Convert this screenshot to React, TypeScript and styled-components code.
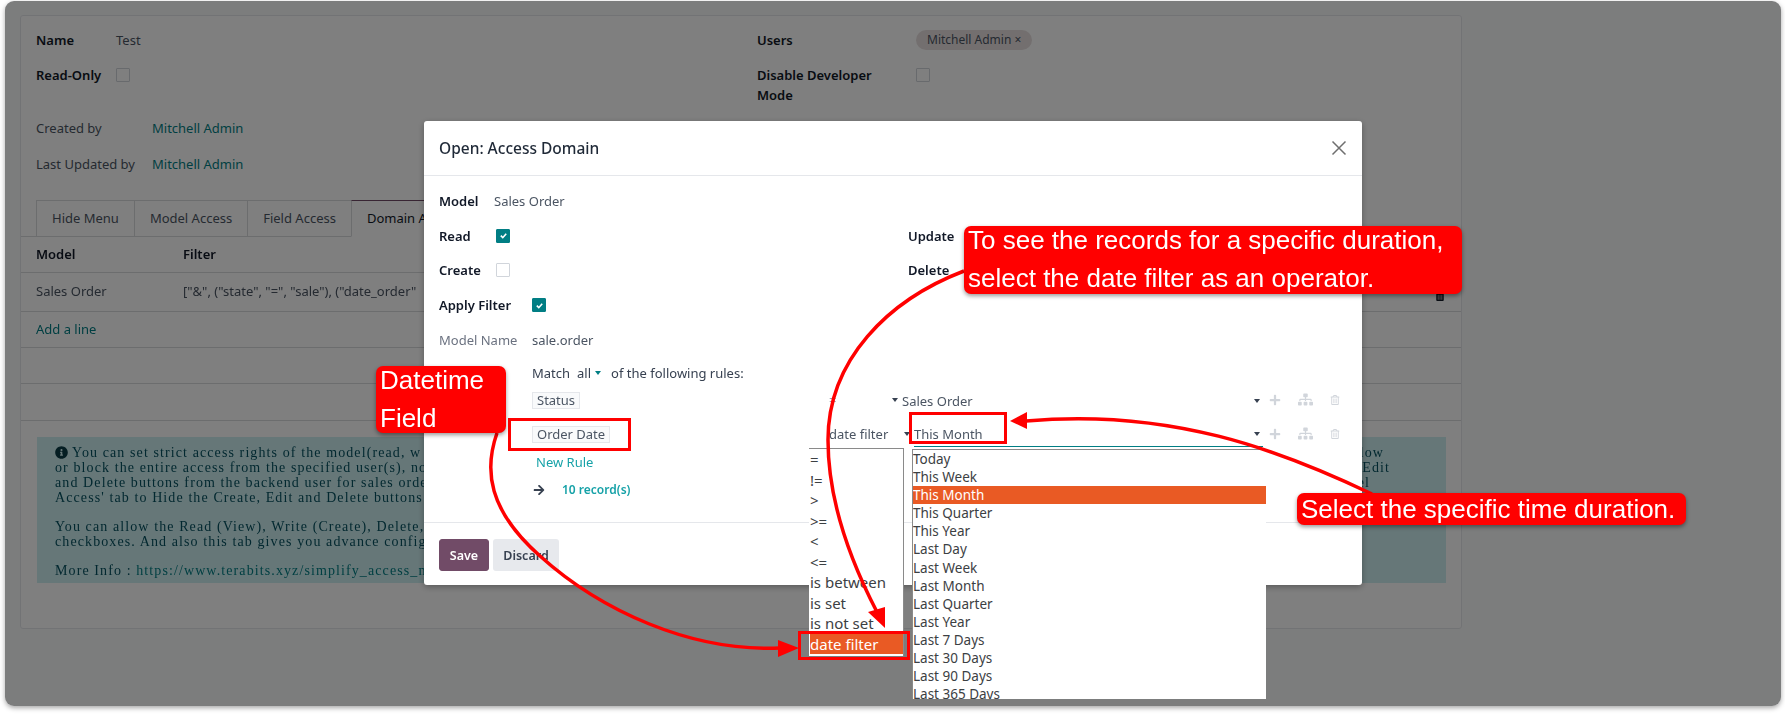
import React from "react";
import styled, { createGlobalStyle } from "styled-components";
import { FaArrowRight, FaInfoCircle, FaPlus, FaRegTrashAlt, FaSitemap, FaTrashAlt } from "react-icons/fa";

const GlobalStyle = createGlobalStyle`
    html, body {
        margin: 0;
        background: #ffffff;
        overflow: hidden;
    }
    * {
        box-sizing: border-box;
    }
`

const teal = "#017e84"
const orange = "#e95a24"
const ui = `"Noto Sans", "Open Sans", sans-serif`

const operators = ["=", "!=", ">", ">=", "<", "<=", "is between", "is set", "is not set", "date filter"]
const durations = ["Today", "This Week", "This Month", "This Quarter", "This Year", "Last Day", "Last Week", "Last Month", "Last Quarter", "Last Year", "Last 7 Days", "Last 30 Days", "Last 90 Days", "Last 365 Days"]

const Check = ({ on }: { on?: boolean }) => (
    <CheckBox $on={on}>
        {on && (
            <svg width="9" height="9" viewBox="0 0 10 10">
                <path d="M2 5.2 4.2 7.4 8 3" fill="none" stroke="#fff" strokeWidth="1.8" />
            </svg>
        )}
    </CheckBox>
)

const RuleActions = () => (
    <Actions>
        <FaPlus size={12} />
        <FaSitemap size={15} />
        <FaRegTrashAlt size={10} />
    </Actions>
)

const Arrows = () => (
    <ArrowLayer width="1785" height="714" viewBox="0 0 1785 714">
        <g fill="none" stroke="#ff0000" strokeWidth="3.5">
            <path d="M497 433C484 470 488 510 540 556C600 610 690 652 780 648" />
            <path d="M964 271C888 300 828 360 828 440C828 500 850 560 877 612" />
            <path d="M1372 494C1280 450 1170 408 1026 421" />
        </g>
        <g fill="#ff0000">
            <path d="M799 648 778 640V657Z" />
            <path d="M885 628 868 612 885 607Z" />
            <path d="M1010 421 1027 412V429Z" />
        </g>
    </ArrowLayer>
)

export default function App() {
    return (
        <Root>
            <GlobalStyle />
            <Window>
                <Sheet>
                    <TopForm>
                        <FormColumn>
                            <FieldRow>
                                <StrongLabel $w={80}>Name</StrongLabel>
                                <Value>Test</Value>
                            </FieldRow>
                            <FieldRow>
                                <StrongLabel $w={80}>Read-Only</StrongLabel>
                                <Check />
                            </FieldRow>
                            <MetaRow $first>
                                <MutedLabel $w={116}>Created by</MutedLabel>
                                <PageLink>Mitchell Admin</PageLink>
                            </MetaRow>
                            <MetaRow>
                                <MutedLabel $w={116}>Last Updated by</MutedLabel>
                                <PageLink>Mitchell Admin</PageLink>
                            </MetaRow>
                        </FormColumn>
                        <FormColumn>
                            <FieldRow>
                                <StrongLabel $w={159}>Users</StrongLabel>
                                <Pill>Mitchell Admin ×</Pill>
                            </FieldRow>
                            <FieldRow $top>
                                <StrongLabel $w={159}>Disable Developer<br />Mode</StrongLabel>
                                <Check />
                            </FieldRow>
                        </FormColumn>
                    </TopForm>
                    <Tabs>
                        <Tab>Hide Menu</Tab>
                        <Tab>Model Access</Tab>
                        <Tab>Field Access</Tab>
                        <Tab $active>Domain Access</Tab>
                    </Tabs>
                    <TableRow $h={36}>
                        <HeadCell>Model</HeadCell>
                        <HeadCell>Filter</HeadCell>
                    </TableRow>
                    <TableRow $h={39}>
                        <Value>Sales Order</Value>
                        <Value>["&", ("state", "=", "sale"), ("date_order"</Value>
                        <RowTrash><FaTrashAlt size={10} /></RowTrash>
                    </TableRow>
                    <TableRow $h={36}>
                        <PageLink>Add a line</PageLink>
                    </TableRow>
                    <TableRow $h={36} />
                    <TableRow $h={37} />
                    <Alert>
                        <AlertLine>
                            <span><InfoIcon size={13} /> You can set strict access rights of the model(read, w</span>
                            <AlertEnd $right={44}>low</AlertEnd>
                        </AlertLine>
                        <AlertLine>
                            <span>or block the entire access from the specified user(s), no</span>
                            <AlertEnd $right={38}>Edit</AlertEnd>
                        </AlertLine>
                        <AlertLine>
                            <span>and Delete buttons from the backend user for sales orde</span>
                            <AlertEnd $right={58}>el</AlertEnd>
                        </AlertLine>
                        <AlertLine $gap>
                            <span>Access' tab to Hide the Create, Edit and Delete buttons</span>
                        </AlertLine>
                        <AlertLine>
                            <span>You can allow the Read (View), Write (Create), Delete,</span>
                        </AlertLine>
                        <AlertLine $gap>
                            <span>checkboxes. And also this tab gives you advance config</span>
                        </AlertLine>
                        <AlertLine>
                            <span>More Info : <AlertLink>https://www.terabits.xyz/simplify_access_m</AlertLink></span>
                        </AlertLine>
                    </Alert>
                </Sheet>
                <Backdrop />
            </Window>

            <Modal>
                <ModalHeader>
                    <ModalTitle>Open: Access Domain</ModalTitle>
                    <CloseIcon width="16" height="16" viewBox="0 0 16 16">
                        <path d="M1.5 1.5 14.5 14.5M14.5 1.5 1.5 14.5" stroke="#6f6f6f" strokeWidth="1.5" />
                    </CloseIcon>
                </ModalHeader>
                <ModalBody>
                    <PermissionGrid>
                        <ModalRow>
                            <ModalLabel $w={55}>Model</ModalLabel>
                            <Value>Sales Order</Value>
                        </ModalRow>
                        <ModalRow />
                        <ModalRow>
                            <ModalLabel $w={57}>Read</ModalLabel>
                            <Check on />
                        </ModalRow>
                        <ModalRow>
                            <ModalLabel $w={57}>Update</ModalLabel>
                        </ModalRow>
                        <ModalRow>
                            <ModalLabel $w={57}>Create</ModalLabel>
                            <Check />
                        </ModalRow>
                        <ModalRow>
                            <ModalLabel $w={57}>Delete</ModalLabel>
                        </ModalRow>
                        <ModalRow>
                            <ModalLabel $w={93}>Apply Filter</ModalLabel>
                            <Check on />
                        </ModalRow>
                        <ModalRow />
                        <ModalRow>
                            <ModelNameLabel>Model Name</ModelNameLabel>
                            <Value>sale.order</Value>
                        </ModalRow>
                    </PermissionGrid>
                    <Domain>
                        <MatchRow>
                            Match <MatchAll>all</MatchAll><SmallCaret $teal /> of the following rules:
                        </MatchRow>
                        <RuleRow>
                            <FieldCell><FieldChip>Status</FieldChip></FieldCell>
                            <OperatorCell $w={73}>
                                <FaintText>=</FaintText>
                                <SmallCaret />
                            </OperatorCell>
                            <ValueCell>
                                Sales Order
                                <SmallCaret />
                            </ValueCell>
                            <RuleActions />
                        </RuleRow>
                        <RuleRow>
                            <FieldCell><FieldChip>Order Date</FieldChip></FieldCell>
                            <OperatorCell $w={85}>
                                date filter
                                <SmallCaret />
                            </OperatorCell>
                            <ValueCell $focused>
                                This Month
                                <SmallCaret />
                            </ValueCell>
                            <RuleActions />
                        </RuleRow>
                        <NewRule>New Rule</NewRule>
                        <RecordsRow>
                            <FaArrowRight size={12} color="#374151" />
                            <Records>10 record(s)</Records>
                        </RecordsRow>
                    </Domain>
                </ModalBody>
                <ModalFooter>
                    <SaveButton>Save</SaveButton>
                    <DiscardButton>Discard</DiscardButton>
                </ModalFooter>
            </Modal>

            <OperatorList>
                {operators.map(item => (
                    <OperatorItem key={item} $selected={item === "date filter"}>{item}</OperatorItem>
                ))}
            </OperatorList>
            <DurationList>
                {durations.map(item => (
                    <DurationItem key={item} $selected={item === "This Month"}>{item}</DurationItem>
                ))}
            </DurationList>

            <Highlight $x={508} $y={418} $w={123} $h={33} />
            <Highlight $x={909} $y={412} $w={98} $h={32} />
            <Highlight $x={798} $y={631} $w={112} $h={29} />
            <Arrows />

            <Callout $x={376} $y={366} $w={130} $h={67}>
                <CalloutText $lift={5}>Datetime<br />Field</CalloutText>
            </Callout>
            <Callout $x={964} $y={226} $w={498} $h={68}>
                <CalloutText $lift={5}>To see the records for a specific duration,<br />select the date filter as an operator.</CalloutText>
            </Callout>
            <Callout $x={1297} $y={493} $w={389} $h={32}>
                <CalloutText $lift={3}>Select the specific time duration.</CalloutText>
            </Callout>
        </Root>
    );
}

const Root = styled.div`
    position: relative;
    width: 1785px;
    height: 714px;
    padding: 1px 4px 8px 5px;
    overflow: hidden;
    font-family: ${ui};
    font-size: 13px;
    color: #374151;
    filter: blur(0.5px);
`
const Window = styled.div`
    position: relative;
    height: 100%;
    padding: 14px 319px 0 15px;
    background: #f9fafb;
    border-radius: 9px;
    box-shadow: 0 2px 5px rgba(0, 0, 0, 0.35);
    overflow: hidden;
`
const Backdrop = styled.div`
    position: absolute;
    inset: 0;
    background: rgba(0, 0, 0, 0.5);
`
const Sheet = styled.div`
    height: 614px;
    padding-top: 6px;
    background: #ffffff;
    border: 1px solid #e5e7eb;
    border-radius: 3px;
`
const TopForm = styled.div`
    display: grid;
    grid-template-columns: 721px 1fr;
    padding-left: 15px;
    height: 178px;
`
const FormColumn = styled.div`
    display: flex;
    flex-direction: column;
`
const FieldRow = styled.div<{ $top?: boolean }>`
    display: flex;
    align-items: ${p => (p.$top ? "flex-start" : "center")};
    min-height: 35px;
    line-height: 20px;
    padding-top: ${p => (p.$top ? "8px" : "0")};

    & > span:last-child {
        margin-top: ${p => (p.$top ? "3px" : "0")};
    }
`
const MetaRow = styled.div<{ $first?: boolean }>`
    display: flex;
    align-items: center;
    height: 36px;
    margin-top: ${p => (p.$first ? "18px" : "0")};
`
const StrongLabel = styled.div<{ $w: number }>`
    width: ${p => p.$w}px;
    font-weight: 600;
    color: #111827;
`
const MutedLabel = styled.div<{ $w: number }>`
    width: ${p => p.$w}px;
    color: #4b5563;
`
const Value = styled.div`
    color: #4b5563;
`
const PageLink = styled.a`
    color: ${teal};
`
const CheckBox = styled.span<{ $on?: boolean }>`
    display: inline-flex;
    align-items: center;
    justify-content: center;
    width: 14px;
    height: 14px;
    background: ${p => (p.$on ? teal : "#ffffff")};
    border: 1px solid ${p => (p.$on ? teal : "#d1d5db")};
    border-radius: 1px;
`
const Pill = styled.span`
    padding: 2px 11px;
    background: #e7dfdf;
    border-radius: 10px;
    font-size: 12px;
    line-height: 16px;
    color: #4b5563;
`
const Tabs = styled.div`
    display: flex;
    height: 37px;
    padding-left: 15px;
    border-bottom: 1px solid #d8dadd;
`
const Tab = styled.div<{ $active?: boolean }>`
    display: flex;
    align-items: center;
    padding: 0 15px 2px;
    height: 37px;
    background: ${p => (p.$active ? "#ffffff" : "transparent")};
    border: 1px solid #d8dadd;
    border-top: 1px solid ${p => (p.$active ? "#714b67" : "#d8dadd")};
    border-bottom: ${p => (p.$active ? "1px solid #ffffff" : "1px solid #d8dadd")};
    margin-right: -1px;
    color: ${p => (p.$active ? "#111827" : "#4b5563")};
`
const TableRow = styled.div<{ $h: number }>`
    position: relative;
    display: grid;
    grid-template-columns: 147px 1fr;
    align-items: center;
    height: ${p => p.$h}px;
    padding: 0 0 2px 15px;
    border-bottom: 1px solid #d8dadd;
`
const HeadCell = styled.div`
    font-weight: 600;
    color: #111827;
`
const RowTrash = styled.span`
    position: absolute;
    right: 16px;
    top: 14px;
    color: #111827;
`
const Alert = styled.div`
    margin: 16px 15px 0 16px;
    height: 146px;
    padding: 8px 18px;
    background: #cdeef0;
    font-family: "Liberation Serif", serif;
    font-size: 14px;
    line-height: 15px;
    letter-spacing: 1.1px;
    color: #055160;
`
const AlertLine = styled.div<{ $gap?: boolean }>`
    display: flex;
    justify-content: space-between;
    white-space: nowrap;
    margin-bottom: ${p => (p.$gap ? "14px" : "0")};
`
const AlertEnd = styled.span<{ $right: number }>`
    margin-right: ${p => p.$right}px;
`
const InfoIcon = styled(FaInfoCircle)`
    vertical-align: -2px;
    color: #0b3c46;
`
const AlertLink = styled.a`
    color: ${teal};
`
const Modal = styled.div`
    position: absolute;
    left: 424px;
    top: 121px;
    width: 938px;
    height: 464px;
    background: #ffffff;
    border-radius: 3px;
    box-shadow: 0 2px 6px rgba(0, 0, 0, 0.3);
    display: flex;
    flex-direction: column;
`
const ModalHeader = styled.div`
    display: flex;
    align-items: center;
    justify-content: space-between;
    height: 55px;
    padding: 0 15px;
    flex-shrink: 0;
    border-bottom: 1px solid #e5e7eb;
`
const ModalTitle = styled.div`
    font-size: 15.5px;
    font-weight: 500;
    color: #1f2937;
`
const CloseIcon = styled.svg`
    margin-right: 0;
`
const ModalBody = styled.div`
    height: 347px;
    padding: 8px 15px 0;
    flex-shrink: 0;
    border-bottom: 1px solid #e5e7eb;
`
const PermissionGrid = styled.div`
    display: grid;
    grid-template-columns: 469px 1fr;
`
const ModalRow = styled.div`
    display: flex;
    align-items: center;
    height: 34.6px;
`
const ModalLabel = styled.div<{ $w: number }>`
    width: ${p => p.$w}px;
    font-weight: 600;
    color: #111827;
`
const ModelNameLabel = styled.div`
    width: 93px;
    color: #6b7280;
`
const Domain = styled.div`
    padding-left: 93px;
`
const MatchRow = styled.div`
    display: flex;
    align-items: center;
    height: 22px;
    margin-top: 5px;
    gap: 4px;
`
const MatchAll = styled.span`
    margin-left: 3px;
`
const SmallCaret = styled.span<{ $teal?: boolean }>`
    display: inline-block;
    flex-shrink: 0;
    margin-right: ${p => (p.$teal ? "6px" : "0")};
    border-top: 4px solid ${p => (p.$teal ? teal : "#374151")};
    border-left: 3.5px solid transparent;
    border-right: 3.5px solid transparent;
`
const RuleRow = styled.div`
    display: flex;
    align-items: center;
    height: 32px;
    margin-bottom: 2px;
`
const FieldCell = styled.div`
    width: 297px;
`
const FieldChip = styled.span`
    display: inline-block;
    padding: 0 4px;
    height: 17px;
    line-height: 15px;
    background: #f9fafb;
    border: 1px solid #e5e7eb;
    color: #4b5563;
`
const OperatorCell = styled.div<{ $w: number }>`
    display: flex;
    align-items: center;
    justify-content: space-between;
    width: ${p => p.$w}px;
    padding-right: 4px;
    color: #4b5563;
`
const FaintText = styled.span`
    color: #9ca3af;
`
const ValueCell = styled.div<{ $focused?: boolean }>`
    flex: 1;
    display: flex;
    align-items: center;
    justify-content: space-between;
    height: ${p => (p.$focused ? "28px" : "auto")};
    margin-top: ${p => (p.$focused ? "-1px" : "2px")};
    padding-top: ${p => (p.$focused ? "2px" : "0")};
    border-bottom: ${p => (p.$focused ? `1px solid ${teal}` : "0")};
    padding-right: 3px;
    color: #4b5563;
`
const Actions = styled.div`
    display: flex;
    align-items: center;
    justify-content: space-between;
    width: 84px;
    padding: 0 7px 0 6px;
    color: #d1d5db;
`
const NewRule = styled.div`
    height: 24px;
    margin-top: -2px;
    line-height: 24px;
    padding-left: 4px;
    color: #17a2a8;
`
const RecordsRow = styled.div`
    display: flex;
    align-items: center;
    gap: 17px;
    height: 28px;
    margin-top: 2px;
    padding-left: 1px;
`
const Records = styled.span`
    font-size: 12px;
    font-weight: 600;
    color: #17a2a8;
`
const ModalFooter = styled.div`
    display: flex;
    gap: 4px;
    padding: 16px 15px;
`
const SaveButton = styled.button`
    width: 50px;
    height: 32px;
    padding: 0;
    background: #714b67;
    border: 1px solid #714b67;
    border-radius: 3px;
    font: 600 12.5px ${ui};
    color: #ffffff;
`
const DiscardButton = styled.button`
    width: 66px;
    height: 32px;
    padding: 0;
    background: #e7e9ed;
    border: 0;
    border-radius: 3px;
    font: 600 12.5px ${ui};
    color: #374151;
`
const OperatorList = styled.ul`
    position: absolute;
    left: 809px;
    top: 448px;
    width: 95px;
    height: 208px;
    margin: 0;
    padding: 0 0 0 1px;
    list-style: none;
    background: #ffffff;
    border-top: 1px solid #8a8a8a;
    border-right: 1px solid #8a8a8a;
`
const OperatorItem = styled.li<{ $selected?: boolean }>`
    height: 20.5px;
    line-height: 20.5px;
    font-size: 15px;
    white-space: nowrap;
    background: ${p => (p.$selected ? orange : "transparent")};
    color: ${p => (p.$selected ? "#ffffff" : "#3c4043")};
`
const DurationList = styled.ul`
    position: absolute;
    left: 912px;
    top: 449px;
    width: 354px;
    height: 250px;
    margin: 0;
    padding: 0;
    list-style: none;
    background: #ffffff;
    border-top: 1px solid #8a8a8a;
    border-left: 1px solid #8a8a8a;
    overflow: hidden;
`
const DurationItem = styled.li<{ $selected?: boolean }>`
    height: 18.1px;
    line-height: 18.1px;
    font-size: 13.5px;
    white-space: nowrap;
    background: ${p => (p.$selected ? orange : "transparent")};
    color: ${p => (p.$selected ? "#ffffff" : "#3c4043")};
`
const Highlight = styled.div<{ $x: number; $y: number; $w: number; $h: number }>`
    position: absolute;
    left: ${p => p.$x}px;
    top: ${p => p.$y}px;
    width: ${p => p.$w}px;
    height: ${p => p.$h}px;
    border: 3px solid #ff0000;
`
const ArrowLayer = styled.svg`
    position: absolute;
    left: 0;
    top: 0;
    pointer-events: none;
`
const Callout = styled.div<{ $x: number; $y: number; $w: number; $h: number }>`
    position: absolute;
    left: ${p => p.$x}px;
    top: ${p => p.$y}px;
    width: ${p => p.$w}px;
    height: ${p => p.$h}px;
    padding-left: 4px;
    background: #ff0000;
    border-radius: 7px;
    box-shadow: 0 2px 4px rgba(0, 0, 0, 0.4);
    font-family: "Liberation Sans", Arial, sans-serif;
    font-size: 26px;
    line-height: 38px;
    white-space: nowrap;
    color: #ffffff;
`
const CalloutText = styled.div<{ $lift: number }>`
    margin-top: -${p => p.$lift}px;
`
